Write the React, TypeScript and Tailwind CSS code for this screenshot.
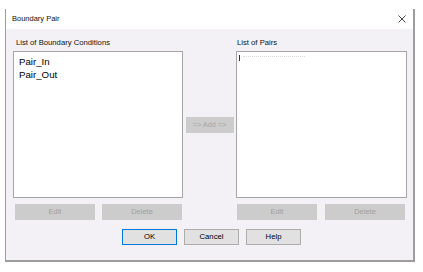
import { ReactNode } from "react";

const font = { fontFamily: '"Liberation Sans", Arial, sans-serif' };

const DisabledButton = ({ label, className }: { label: string; className: string }) => (
    <div
        className={`flex h-[16px] items-center justify-center bg-[#cccccc] text-[7.5px] text-[#a0a0a0] ${className}`}
    >
        {label}
    </div>
);

const DialogButton = ({ children, primary }: { children: ReactNode; primary?: boolean }) => (
    <div
        className={`flex h-[16px] w-[55px] items-center justify-center bg-[#e1e1e1] text-[7.7px] text-black border ${
            primary ? "border-[#0078d7]" : "border-[#adadad]"
        }`}
    >
        {children}
    </div>
);

const ListBox = ({ children, className }: { children?: ReactNode; className: string }) => (
    <div className={`h-[147px] border border-[#a6a6a6] bg-white ${className}`}>{children}</div>
);

const App = () => {
    return (
        <div className="h-[272px] w-[423px] bg-white" style={font}>
            <div className="ml-[5px] pt-[9px]">
                <div className="flex h-[253px] w-[410px] flex-col border-l border-r-2 border-b-2 border-[#9d9d9d]">
                    {/* title bar */}
                    <div className="flex h-[20px] items-center justify-between bg-white pl-[6px] pr-[6px]">
                        <span className="text-[7.5px] text-[#111]">Boundary Pair</span>
                        <svg width="8" height="8" viewBox="0 0 8 8" className="mr-[1px]">
                            <path d="M0.5 0.5 L7.5 7.5 M7.5 0.5 L0.5 7.5" stroke="#333" strokeWidth="0.9" />
                        </svg>
                    </div>

                    {/* body */}
                    <div className="flex flex-1 flex-col bg-[#f3f1f5] pl-[7px] pr-[6px] pt-[6px]">
                        <div className="flex">
                            <div className="flex w-[170px] flex-col">
                                <div className="h-[16px] pl-[3px] text-[7.7px] leading-[16px] text-[#111]">
                                    List of Boundary Conditions
                                </div>
                                <ListBox className="w-[170px] pl-[5px] pt-[3px]">
                                    <div className="text-[9.7px] leading-[13px] text-black">Pair_In</div>
                                    <div className="text-[9.7px] leading-[13px] text-black">Pair_Out</div>
                                </ListBox>
                            </div>

                            <div className="flex w-[53px] items-end justify-center pb-[65px]">
                                <div className="flex h-[16px] w-[48px] items-center justify-center bg-[#cccccc] text-[7.3px] text-[#a6a6a6]">
                                    =&gt; Add =&gt;
                                </div>
                            </div>

                            <div className="flex w-[171px] flex-col">
                                <div className="h-[16px] pl-[1px] text-[7.7px] leading-[16px] text-[#111]">
                                    List of Pairs
                                </div>
                                <ListBox className="w-[171px] pl-[2px] pt-[3px]">
                                    <div className="flex items-start gap-[3px]">
                                        <div className="h-[6px] w-[1px] bg-[#333]" />
                                        <div className="mt-[1px] h-[1px] w-[62px] border-t border-dotted border-[#dcdcdc]" />
                                    </div>
                                </ListBox>
                            </div>
                        </div>

                        <div className="mt-[6px] flex">
                            <div className="flex w-[170px] gap-[7px] pl-[2px]">
                                <DisabledButton label="Edit" className="w-[80px]" />
                                <DisabledButton label="Delete" className="w-[80px]" />
                            </div>
                            <div className="w-[53px]" />
                            <div className="flex w-[171px] gap-[8px] pl-[1px]">
                                <DisabledButton label="Edit" className="w-[80px]" />
                                <DisabledButton label="Delete" className="w-[80px]" />
                            </div>
                        </div>

                        <div className="mt-[9px] flex gap-[7px] pl-[109px]">
                            <DialogButton primary>OK</DialogButton>
                            <DialogButton>Cancel</DialogButton>
                            <DialogButton>Help</DialogButton>
                        </div>
                    </div>
                </div>
            </div>
        </div>
    );
};

export default App;
